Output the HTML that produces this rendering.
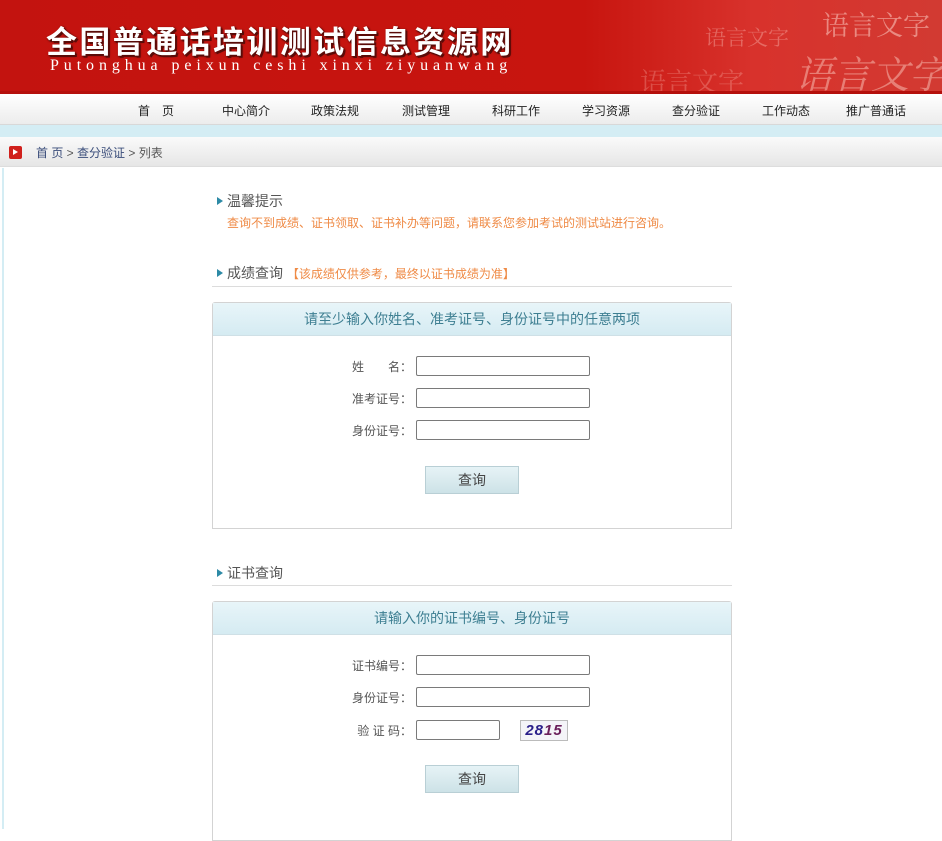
<!DOCTYPE html>
<html><head><meta charset="utf-8"><style>
*{margin:0;padding:0;box-sizing:border-box}
body{width:942px;height:829px;overflow:hidden;background:#fff;font-family:"Liberation Sans","Noto Sans CJK SC",sans-serif;font-size:12px;color:#555;position:relative}
.abs{position:absolute}
#hd{left:0;top:0;width:942px;height:94px;background:linear-gradient(90deg,#c3130f 0%,#c8150f 62%,#d8322c 80%,#d23a32 100%);border-bottom:3px solid #b5100c;overflow:hidden}
#title{left:46px;top:17px;color:#fff;font-size:31px;font-weight:bold;letter-spacing:2.4px;text-shadow:2px 2px 0 #5a0b08,1px 1px 2px #000;font-family:"Noto Sans CJK SC",sans-serif}
#sub{left:50px;top:57px;color:#fff;font-family:"Liberation Serif",serif;font-size:16px;letter-spacing:4.9px}
.wm{color:rgba(255,210,200,.35);font-family:"Noto Serif CJK SC",serif;white-space:nowrap}
#nav{left:0;top:94px;width:942px;height:31px;background:linear-gradient(#fff,#ececec);border-bottom:1px solid #d8d8d8}
#nav span{position:absolute;top:8px;width:90px;text-align:center;color:#222;font-size:12px}
#band{left:0;top:125px;width:942px;height:12px;background:#d4edf4}
#bc{left:0;top:137px;width:942px;height:30px;background:linear-gradient(#fafafa,#e6e6e6);border-bottom:1px solid #ddd;font-size:12px;color:#555}
#bc .ic{position:absolute;left:9px;top:9px;width:13px;height:13px;background:#d0201c;border-radius:2px}
#bc .ic:after{content:"";position:absolute;left:4px;top:3px;border-left:5px solid #fff;border-top:3.5px solid transparent;border-bottom:3.5px solid transparent}
#lb{left:2px;top:168px;width:2px;height:661px;background:#d4edf4}
.tri{display:inline-block;border-left:6px solid #2d8aa6;border-top:4.5px solid transparent;border-bottom:4.5px solid transparent;margin-right:4px;vertical-align:1px}
.h{font-size:14px;color:#555}
.or{color:#ef8a45;font-size:12px}
.hr{height:1px;background:#dcdcdc;width:520px;left:212px}
.box{left:212px;width:520px;border:1px solid #d3d3d3;border-radius:3px 3px 0 0}
.bh{height:33px;background:linear-gradient(#e8f5f9,#d5ebf2);border-bottom:1px solid #cfe0e6;text-align:center;line-height:33px;color:#3e7f92;font-size:14px}
.lab{width:70px;text-align:right;left:342px;color:#555;font-size:12px}
.in{left:416px;width:174px;height:20px;border:1px solid #7a7a7a;border-radius:2px;background:#fff}
.btn{left:425px;width:94px;height:28px;background:linear-gradient(#e6f3f6,#cde2e7);border:1px solid #b9cfd5;text-align:center;line-height:26px;font-size:14px;color:#444}
</style></head><body>
<div id="hd" class="abs">
 <div class="abs wm" style="left:705px;top:22px;font-size:21px">语言文字</div>
 <div class="abs wm" style="left:822px;top:4px;font-size:27px;color:rgba(255,220,210,.5)">语言文字</div>
 <div class="abs wm" style="left:640px;top:62px;font-size:26px;color:rgba(255,200,190,.28)">语言文字</div>
 <div class="abs wm" style="left:795px;top:44px;font-size:38px;color:rgba(255,215,205,.45);font-style:italic">语言文字</div>
 <div id="title" class="abs">全国普通话培训测试信息资源网</div>
 <div id="sub" class="abs">Putonghua peixun ceshi xinxi ziyuanwang</div>
</div>
<div id="nav" class="abs">
 <span style="left:111px">首　页</span><span style="left:201px">中心简介</span><span style="left:290px">政策法规</span><span style="left:381px">测试管理</span><span style="left:471px">科研工作</span><span style="left:561px">学习资源</span><span style="left:651px">查分验证</span><span style="left:741px">工作动态</span><span style="left:831px">推广普通话</span>
</div>
<div id="band" class="abs"></div>
<div id="bc" class="abs"><div class="ic"></div><div class="abs" style="left:36px;top:7px"><span style="color:#3a4d7a">首 页</span> &gt; <span style="color:#3a4d7a">查分验证</span> &gt; 列表</div></div>
<div id="lb" class="abs"></div>

<div class="abs h" style="left:217px;top:191px"><span class="tri"></span>温馨提示</div>
<div class="abs or" style="left:227px;top:214px">查询不到成绩、证书领取、证书补办等问题，请联系您参加考试的测试站进行咨询。</div>
<div class="abs h" style="left:217px;top:263px"><span class="tri"></span>成绩查询 <span class="or">【该成绩仅供参考，最终以证书成绩为准】</span></div>
<div class="abs hr" style="top:286px"></div>

<div class="abs box" style="top:302px;height:227px"><div class="bh">请至少输入你姓名、准考证号、身份证号中的任意两项</div></div>
<div class="abs lab" style="top:358px">姓　　名：</div><div class="abs in" style="top:356px"></div>
<div class="abs lab" style="top:390px">准考证号：</div><div class="abs in" style="top:388px"></div>
<div class="abs lab" style="top:422px">身份证号：</div><div class="abs in" style="top:420px"></div>
<div class="abs btn" style="top:466px">查询</div>

<div class="abs h" style="left:217px;top:563px"><span class="tri"></span>证书查询</div>
<div class="abs hr" style="top:585px"></div>
<div class="abs box" style="top:601px;height:240px"><div class="bh">请输入你的证书编号、身份证号</div></div>
<div class="abs lab" style="top:657px">证书编号：</div><div class="abs in" style="top:655px"></div>
<div class="abs lab" style="top:689px">身份证号：</div><div class="abs in" style="top:687px"></div>
<div class="abs lab" style="top:722px">验 证 码：</div><div class="abs in" style="top:720px;width:84px"></div>
<div class="abs" style="left:520px;top:720px;width:48px;height:21px;border:1px solid #bbb;background:#f4f4f8;text-align:center;font:italic bold 15px 'Liberation Sans',sans-serif;line-height:20px;color:#2a1f8a;letter-spacing:1px">28<span style="color:#6a1f5a">15</span></div>
<div class="abs btn" style="top:765px">查询</div>
</body></html>
